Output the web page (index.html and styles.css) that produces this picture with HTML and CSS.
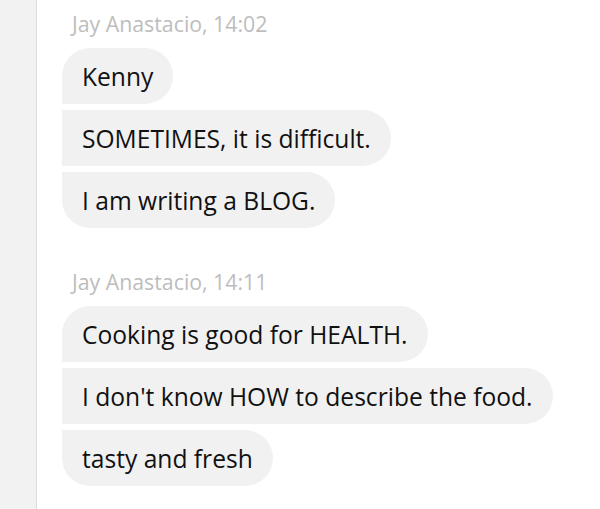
FILE: index.html
```html
<!DOCTYPE html>
<html>
  <head>
    <meta charset="UTF-8">
    <title>Chat</title>
    <link rel="stylesheet" href="styles.css">
  </head>
  <body>
    <div class="layout">
      <div class="sidebar"></div>

      <div class="conversation">
        <div class="group">
          <div class="group-meta">Jay Anastacio, 14:02</div>
          <div class="bubble">Kenny</div>
          <div class="bubble">SOMETIMES, it is difficult.</div>
          <div class="bubble">I am writing a BLOG.</div>
        </div>

        <div class="group">
          <div class="group-meta">Jay Anastacio, 14:11</div>
          <div class="bubble">Cooking is good for HEALTH.</div>
          <div class="bubble">I don't know HOW to describe the food.</div>
          <div class="bubble">tasty and fresh</div>
        </div>
      </div>
    </div>
  </body>
</html>
```

FILE: styles.css
```css
html, body {
  margin: 0;
  height: 100%;
}

body {
  font-family: 'Open Sans', 'Noto Sans', sans-serif;
  color: #111;
  background: #fff;
}

.layout {
  display: flex;
  height: 100%;
}

.sidebar {
  width: 36px;
  flex-shrink: 0;
  background: #f2f2f2;
  border-right: 1px solid #dcdcdc;
}

.conversation {
  flex: 1;
  padding: 10px 0 0 25px;
}

.group {
  display: flex;
  flex-direction: column;
  align-items: flex-start;
  gap: 6px;
  margin-bottom: 40px;
}

.group-meta {
  font-size: 21.3px;
  line-height: 27px;
  color: #bdbdbd;
  padding-left: 10px;
  margin-bottom: 5px;
}

.bubble {
  background: #f1f1f1;
  font-size: 24.6px;
  line-height: 32px;
  padding: 13px 20px 11px;
  border-radius: 0 28px 28px 0;
}

.group-meta + .bubble {
  border-top-left-radius: 28px;
}

.bubble:last-child {
  border-bottom-left-radius: 28px;
}
```
